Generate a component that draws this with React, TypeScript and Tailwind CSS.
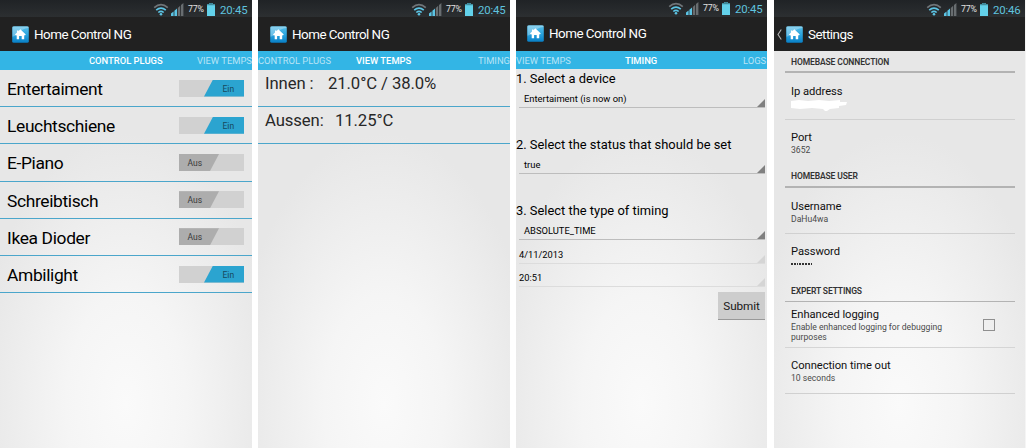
import React from "react";

type PanelProps = { time: string; title: string; back?: boolean; children: React.ReactNode; className?: string; raised?: boolean };

function Wifi() {
  return (
    <svg width="16" height="13" viewBox="0 0 16 13" fill="none" strokeLinecap="butt">
      <path d="M1.2 4.6Q8-1.2 14.8 4.6" stroke="#6f7478" strokeWidth="1.7" />
      <path d="M3.2 7.1Q8 3 12.8 7.1" stroke="#5cc4e4" strokeWidth="1.7" />
      <path d="M5.3 9.5Q8 7.2 10.7 9.5" stroke="#5cc4e4" strokeWidth="1.6" />
      <circle cx="8" cy="11.2" r="1.3" fill="#5cc4e4" />
    </svg>
  );
}

function Signal() {
  return (
    <svg width="13" height="13" viewBox="0 0 13 13">
      <path d="M0 13V10.4L2.6 8.4V13ZM3.4 13V7.8L6 5.6V13Z" fill="#5cc4e4" />
      <path d="M6.8 13V4.9L9.2 2.8V13ZM10 13V2L12.4 0V13Z" fill="#686d70" />
    </svg>
  );
}

function Battery() {
  return (
    <svg width="8" height="13" viewBox="0 0 8 13">
      <path d="M2.2 0H5.8V1.3H8V13H0V1.3H2.2Z" fill="#63d1ea" />
      <path d="M2.2 0H5.8V1.3H8V2.2H0V1.3H2.2Z" fill="#3f8798" />
    </svg>
  );
}

function HomeIcon() {
  return (
    <svg className="shrink-0" width="17" height="17" viewBox="0 0 17 17">
      <defs>
        <linearGradient id="home-blue" x1="0" y1="0" x2="0" y2="1">
          <stop offset="0" stopColor="#59bfe8" />
          <stop offset=".5" stopColor="#2ba5df" />
          <stop offset="1" stopColor="#087fc6" />
        </linearGradient>
      </defs>
      <rect x=".2" y=".2" width="16.6" height="16.6" rx="1.6" fill="url(#home-blue)" />
      <path d="M.5.5H16.5V2Q10 2.5 5.5 7.5Q3 10 .5 10.8Z" fill="#fff" opacity=".3" />
      <path d="M8.3 3.2L13.8 8.5L12.8 9.6L12.2 9V13.2H9.7V9.9H7.1V13.2H4.7V9L4 9.7L3 8.6L5 6.6V4.4H6.4V5.2Z" fill="#fff" />
    </svg>
  );
}

function Panel({ time, title, back, children, className = "", raised }: PanelProps) {
  return (
    <section className={"flex h-[448px] shrink-0 flex-col overflow-hidden bg-[radial-gradient(ellipse_150px_270px_at_50%_90%,#fafafa_0%,#f5f5f5_40%,#e7e7e7_100%)] " + className}>
      <div className={"flex h-[17px] shrink-0 items-center justify-end bg-linear-to-b from-[#202326] to-[#2c2f31] pr-[4px] " + (raised ? "" : "pt-[2px]")}>
        <Wifi />
        <div className="ml-[2px]"><Signal /></div>
        <span className="ml-[4px] w-[17px] text-[8.8px] leading-[13px] tracking-[-0.2px] whitespace-nowrap text-[#e1e1e1]">77%</span>
        <div className="ml-[2px]"><Battery /></div>
        <span className="ml-[5px] w-[28px] text-[11.4px] leading-[12px] tracking-[-0.15px] whitespace-nowrap text-[#5fc3df]">{time}</span>
      </div>
      <div className={"flex h-[34px] shrink-0 items-center bg-[#212121] text-white " + (raised ? "pb-[2px]" : "")}>
        <div className={"flex justify-start pl-[3px] " + (raised ? "w-[11px]" : "w-[12px]")}>
          {back && (
            <svg width="5" height="11" viewBox="0 0 5 11" fill="none" stroke="#b5b5b5" strokeWidth="1.1"><path d="M4.3.5L1 5.5L4.3 10.5" /></svg>
          )}
        </div>
        <HomeIcon />
        <h1 className="ml-[5px] pt-px text-[13.4px] leading-[18px] tracking-[-0.5px] whitespace-nowrap">{title}</h1>
      </div>
      {children}
    </section>
  );
}

const tabBar = "flex shrink-0 items-center bg-[#33b5e5] text-[9.4px] leading-[18px] pt-px whitespace-nowrap text-[#b9e4f6]";

function Toggle({ on }: { on: boolean }) {
  return (
    <div className={"flex h-[17px] w-[65px] bg-[#d1d1d1] " + (on ? "justify-end" : "")}>
      {on ? (
        <div className="w-[40px] bg-[#2ba4d0] pl-[18.5px] text-[8.5px] leading-[19px] text-[#17495c] [clip-path:polygon(9px_0,100%_0,100%_100%,0_100%)]">Ein</div>
      ) : (
        <div className="w-[40px] bg-[#adadad] pl-[8.5px] text-[8.5px] leading-[19px] text-[#3a3a3a] [clip-path:polygon(0_0,100%_0,31px_100%,0_100%)]">Aus</div>
      )}
    </div>
  );
}

const plugs = [
  { name: "Entertaiment", on: true },
  { name: "Leuchtschiene", on: true },
  { name: "E-Piano", on: false },
  { name: "Schreibtisch", on: false },
  { name: "Ikea Dioder", on: false },
  { name: "Ambilight", on: true },
];

function Corner({ faint }: { faint?: boolean }) {
  return <svg width="8" height="8" viewBox="0 0 8 8"><path d="M8 0V8H0Z" fill={faint ? "#d5d5d5" : "#808080"} /></svg>;
}

function Spinner({ text }: { text: string }) {
  return (
    <div className="mr-[2px] ml-[3px] flex h-[21px] items-end justify-between border-b border-[#bdbdbd] pl-[5px]">
      <span className="text-[9.4px] leading-[16px]">{text}</span>
      <Corner />
    </div>
  );
}

function Field({ text }: { text: string }) {
  return (
    <div className="mr-[2px] ml-[3px] flex h-[23.5px] items-end justify-between border-b border-[#dcdcdc]">
      <span className="text-[9.3px] leading-[17px]">{text}</span>
      <Corner faint />
    </div>
  );
}

function Heading({ children, className = "" }: { children: React.ReactNode; className?: string }) {
  return <h2 className={"border-b border-[#b3b3b3] pl-[6px] text-[8.5px] font-semibold tracking-[-0.12px] whitespace-nowrap text-[#333] " + className}>{children}</h2>;
}

function Item({ title, sub, className = "" }: { title: string; sub?: React.ReactNode; className?: string }) {
  return (
    <div className={"pl-[6px] " + className}>
      <div className="text-[11.2px] leading-[14px] tracking-[-0.05px] whitespace-nowrap text-[#111]">{title}</div>
      {sub && <div className="text-[8.6px] leading-[10px] text-[#4a4a4a]">{sub}</div>}
    </div>
  );
}

export default function App() {
  return (
    <main className="flex h-[448px] w-[1026px] overflow-hidden bg-white font-['Roboto',sans-serif] text-black">
      <Panel time="20:45" title="Home Control NG" className="w-[252px]">
        <nav className={tabBar + " h-[19px]"}>
          <span className="ml-[89px] w-[108px] font-medium text-white">CONTROL PLUGS</span>
          <span>VIEW TEMPS</span>
        </nav>
        <ul>
          {plugs.map((p) => (
            <li key={p.name} className="flex h-[37.2px] items-center justify-between border-b border-[#4ba6cb] pr-[8px] pl-[7px]">
              <span className="pt-[2px] text-[17.4px] leading-[22px] tracking-[-0.35px]">{p.name}</span>
              <Toggle on={p.on} />
            </li>
          ))}
        </ul>
      </Panel>
      <Panel time="20:45" title="Home Control NG" className="ml-[6px] w-[252px]">
        <nav className={tabBar + " h-[19px]"}>
          <span className="w-[98px]">CONTROL PLUGS</span>
          <span className="w-[122px] font-medium text-white">VIEW TEMPS</span>
          <span>TIMING</span>
        </nav>
        <div className="flex h-[37px] border-b border-[#4ba6cb] pl-[7px] text-[16.7px] leading-[28px] tracking-[-0.1px] whitespace-nowrap text-[#272727]">
          <span className="w-[63px]">Innen :</span><span>21.0°C / 38.0%</span>
        </div>
        <div className="flex h-[37px] border-b border-[#4ba6cb] pl-[7px] text-[16.7px] leading-[28px] tracking-[-0.1px] whitespace-nowrap text-[#272727]">
          <span className="w-[70px]">Aussen:</span><span>11.25°C</span>
        </div>
      </Panel>
      <Panel time="20:45" title="Home Control NG" raised className="ml-[6px] w-[251px]">
        <nav className={tabBar + " h-[18px]"}>
          <span className="w-[109px]">VIEW TEMPS</span>
          <span className="w-[118px] font-medium text-white">TIMING</span>
          <span>LOGS</span>
        </nav>
        <h2 className="h-[18px] text-[12.9px] leading-[19px] whitespace-nowrap">1. Select a device</h2>
        <Spinner text="Entertaiment (is now on)" />
        <h2 className="mt-[27px] h-[18px] text-[12.9px] leading-[19px] whitespace-nowrap">2. Select the status that should be set</h2>
        <Spinner text="true" />
        <h2 className="mt-[27px] h-[18px] text-[12.9px] leading-[19px] whitespace-nowrap">3. Select the type of timing</h2>
        <Spinner text="ABSOLUTE_TIME" />
        <Field text="4/11/2013" />
        <Field text="20:51" />
        <button className="mt-[5px] mr-[2px] h-[28px] w-[47px] self-end border-b border-[#999] bg-[#cdcdcd] pt-[2px] text-[11.7px] tracking-[-0.1px] text-[#181818]">Submit</button>
      </Panel>
      <Panel time="20:46" title="Settings" back className="ml-[7px] w-[252px] border-r border-[#f5f5f5]">
        <div className="mr-[10px] ml-[11px] flex flex-col">
          <Heading className="h-[22px] border-b-2 leading-[23px]">HOMEBASE CONNECTION</Heading>
          <div className="h-[47px] border-b border-[#d0d0d0] pt-[12px]">
            <Item title="Ip address" />
            <svg className="ml-[5px]" width="58" height="13" viewBox="0 0 58 13" fill="#fff"><path d="M1 2L9 1L18 2L29 1L39 2L50 1V3H57L56 6L49 7V9L40 10L37 12H35L33 10L22 9L10 10L1 9Z" /></svg>
          </div>
          <Item className="h-[46px] pt-[11px]" title="Port" sub="3652" />
          <Heading className="h-[22px] border-b-2 leading-[21px]">HOMEBASE USER</Heading>
          <Item className="h-[46px] border-b border-[#d0d0d0] pt-[11.5px]" title="Username" sub="DaHu4wa" />
          <Item className="h-[46px] pt-[11px]" title="Password" sub={<span className="flex h-[10px] items-center gap-[1px]">{Array.from({ length: 8 }, (_, i) => <i key={i} className="h-[2px] w-[1.8px] bg-[#333]" />)}</span>} />
          <Heading className="h-[22px] leading-[23px]">EXPERT SETTINGS</Heading>
          <div className="flex h-[46px] items-center justify-between border-b border-[#d5d5d5] pr-[20px]">
            <Item className="w-[175px] pt-[1.5px]" title="Enhanced logging" sub="Enable enhanced logging for debugging purposes" />
            <div className="h-[12px] w-[12px] border border-[#8f8f8f]" />
          </div>
          <Item className="h-[46px] border-b border-[#d0d0d0] pt-[11px]" title="Connection time out" sub="10 seconds" />
        </div>
      </Panel>
    </main>
  );
}
